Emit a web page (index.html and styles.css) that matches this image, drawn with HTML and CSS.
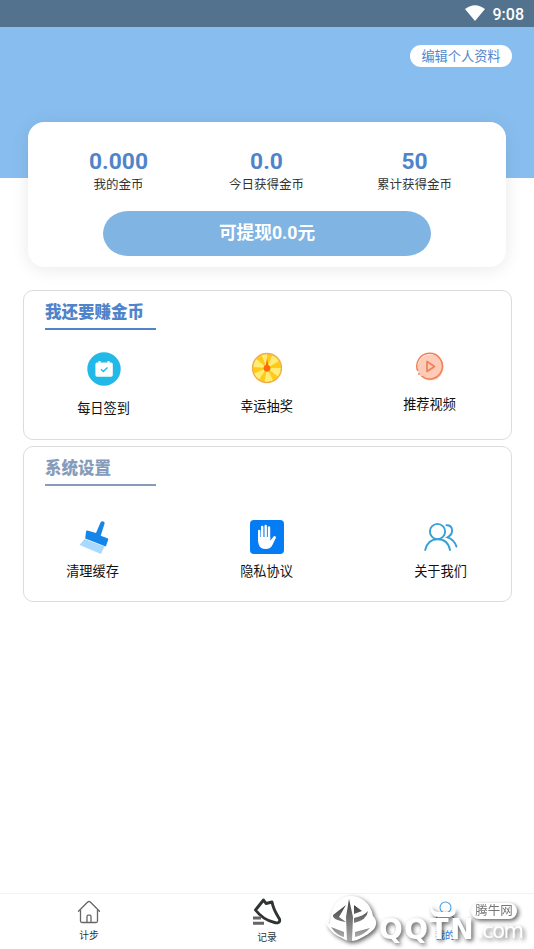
FILE: index.html
```html
<!DOCTYPE html>
<html lang="zh-CN">
<head>
<meta charset="utf-8">
<title>我的</title>
<link rel="stylesheet" href="styles.css">
</head>
<body>
<div class="screen">
  <header class="status">
    <svg class="wifi" width="20" height="16" viewBox="0 0 20 16"><path d="M0 4Q10-3.600 20 4L10 16Z" fill="#fff"/></svg>
    <span class="clock">9:08</span>
  </header>
  <section class="hero"><button class="edit">编辑个人资料</button></section>

  <section class="wallet">
    <div class="stats">
      <div class="stat"><b>0.000</b><span>我的金币</span></div>
      <div class="stat"><b>0.0</b><span>今日获得金币</span></div>
      <div class="stat"><b>50</b><span>累计获得金币</span></div>
    </div>
    <button class="withdraw">可提现0.0元</button>
  </section>

  <section class="panel earn">
    <h2>我还要赚金币</h2>
    <div class="items">
      <div class="item">
        <svg width="34" height="34" viewBox="0 0 34 34"><circle cx="17" cy="17" r="16.700" fill="#20b9e8"/><path d="M10 10.500h1.500V9h2v1.500h7V9h2v1.500H24q1.800 0 1.800 1.800V23q0 1.800-1.800 1.800H10.200Q8.400 24.800 8.400 23V12.300q0-1.800 1.600-1.800Z" fill="#fff"/><path d="m14 17.300 2.300 2.200 4.200-4" fill="none" stroke="#20b9e8" stroke-width="1.400"/></svg>
        <span>每日签到</span>
      </div>
      <div class="item">
        <svg width="32" height="32" viewBox="0 0 32 32"><circle cx="16" cy="16" r="14.500" fill="#ffca18"/><g fill="#ffed78"><path d="M16 16 10.500 3A14 14 0 0 1 16 2Z"/><path d="M16 16 21.400 3A14 14 0 0 1 28 9Z"/><path d="M16 16 30 16A14 14 0 0 1 27 24.500Z"/><path d="M16 16 22 28.600A14 14 0 0 1 13.500 29.800Z"/><path d="M16 16 8 27.500A14 14 0 0 1 3 21.500Z"/><path d="M16 16 2 15A14 14 0 0 1 5.300 7Z"/></g><circle cx="16" cy="16" r="14.500" fill="none" stroke="#f0ad4a" stroke-width="1.300"/><path d="M16 6l1.200 7a3.500 3.500 0 1 1-2.400 0Z" fill="#ff6b0b"/></svg>
        <span>幸运抽奖</span>
      </div>
      <div class="item">
        <svg width="30" height="30" viewBox="0 0 30 30"><circle cx="15.500" cy="15.500" r="13" fill="#ffcbb9"/><path d="M2.800 19A12.800 12.800 0 1 1 6.500 24" fill="none" stroke="#ee8158" stroke-width="1.500"/><path d="m3.500 21.200 1 1.500" stroke="#ee8158" stroke-width="1.600"/><path d="M12 9.500v10l7.500-5Z" fill="none" stroke="#ee8158" stroke-width="1.700" stroke-linejoin="round"/></svg>
        <span>推荐视频</span>
      </div>
    </div>
  </section>

  <section class="panel settings">
    <h2>系统设置</h2>
    <div class="items">
      <div class="item clean">
        <svg width="34" height="36" viewBox="0 0 34 36"><path d="m6.500 19 20 7.500-3.500 7.500L1.500 25Z" fill="#a9dafd"/><path d="m9.300 10.500 8.700 2.600 4.500-10.500q1.500-2.300 3.500-.8.900.7.500 2l-3.800 12 6.800 2.400q1 .5.700 1.600l-2.400 6.700L7.200 18.500l.9-7.200q.2-1 1.200-.8Z" fill="#1685e8"/></svg>
        <span>清理缓存</span>
      </div>
      <div class="item">
        <svg width="34" height="34" viewBox="0 0 34 34"><rect width="34" height="34" rx="4" fill="#047cf4"/><g fill="none" stroke="#fff" stroke-width="2.400" stroke-linecap="round"><path d="M9.200 11v9M12.200 7v12M15.700 6v13M19 7.500V19"/><path d="m24.500 17.500-3.500 5" stroke-width="2.800"/></g><path d="M8 17h12.200v3.500L23 18l2.700.1-3 6.300q-2 4.500-7 4.500-5.500 0-7-4.500Q7.800 22.300 8 17Z" fill="#fff"/></svg>
        <span>隐私协议</span>
      </div>
      <div class="item">
        <svg width="34" height="34" viewBox="0 0 34 34" fill="none" stroke="#36a0d6" stroke-width="1.900" stroke-linecap="round"><circle cx="13.500" cy="11.500" r="7.600"/><path d="M1.200 30C3 22.500 7.500 19.300 13.500 19.300S24.500 22.500 26 30M22.500 5.200C29 5 30.500 13.500 23.500 17.300c5 1.600 7.500 4.500 9 9.300"/></svg>
        <span>关于我们</span>
      </div>
    </div>
  </section>

  <nav class="tabs">
    <a class="tab"><svg width="24" height="24" viewBox="0 0 24 24" fill="none" stroke="#666" stroke-width="1.300" stroke-linejoin="round" stroke-linecap="round"><path d="M1.500 11.200 10.700 2q1.300-1 2.600 0l9.200 9.200M3.500 10v11q0 1.500 1.500 1.500h14q1.500 0 1.500-1.500V10M10 22v-5.500q0-1.300 1.300-1.300h1.400q1.300 0 1.300 1.300V22"/></svg><span>计步</span></a>
    <a class="tab record"><svg width="30" height="28" viewBox="0 0 30 28"><path d="M3.500 12 11.500 2l2.500 3.500L20 4C21.500 12 24.500 16 27.500 21c1 3.500-2 4.500-5 3.500C14 22.500 8 18 3.500 12Z" fill="none" stroke="#303333" stroke-width="2.900" stroke-linejoin="round"/><path d="M1 20h8M1 25.300h11" stroke="#666" stroke-width="3"/></svg><span>记录</span></a>
    <a class="tab mine"><svg width="24" height="24" viewBox="0 0 24 24" fill="none" stroke="#40a0e8" stroke-width="1.100"><circle cx="12.500" cy="7.500" r="5.500"/><path d="M2 22c1-6 4-9 10-9s9 3 10 9"/></svg><span>我的</span></a>
  </nav>

  <div class="mark">
    <svg class="mark-logo" width="56" height="56" viewBox="0 0 56 56">
      <defs><linearGradient id="shade" x1="0" y1="0" x2="0" y2="1"><stop offset="0" stop-color="#444"/><stop offset="1" stop-color="#aaa"/></linearGradient></defs>
      <path d="M7 23C9 10 17 3 27 3s20 7 22 20c4 4 4 9 1 13-5 5-9 7-13 9-6 4-14 4-19 0C12 43 4 37 2 29l4 2Z" fill="#fff"/>
      <path d="m25 6-3 18 1 24h5l1-24Z" fill="url(#shade)"/>
      <path d="m22 12-13 10q-1 5 13 7l-7-5ZM30 12l8 6-8 3v4q10-2 14-7-1 9-14 12ZM7 34q5 8 13 10v-5ZM31 39v5q9-2 15-9Z" fill="url(#shade)"/>
    </svg>
    <svg class="mark-horns" width="30" height="18" viewBox="0 0 30 18"><path d="M1 3c-2 7 2 12 8 12h9c6 0 9-4 7-9-1 3-3 4-7 4H9C5 10 2 8 1 3Z" fill="#fff"/></svg>
    <span class="mark-name">QQTN</span>
    <span class="mark-domain">.com</span>
    <span class="mark-tag">腾牛网</span>
  </div>
</div>
</body>
</html>
```
FILE: styles.css
```css
* { box-sizing: border-box; }
body {
  margin: 0;
  background: #fff;
  font-family: Roboto, "Noto Sans CJK SC", sans-serif;
}
button { border: 0; padding: 0; font-family: inherit; }
svg { display: block; flex: none; }

.screen {
  position: relative;
  display: flex;
  flex-direction: column;
  height: 949px;
  overflow: hidden;
}
.status {
  display: flex;
  align-items: center;
  justify-content: flex-end;
  gap: 8px;
  height: 27px;
  padding-right: 10px;
  background: #52728e;
}
.wifi { margin-bottom: 1px; }
.clock { color: #fff; font-size: 16px; font-weight: 500; line-height: 27px; padding-top: 2px; }

.hero {
  display: flex;
  justify-content: flex-end;
  align-items: flex-start;
  height: 151px;
  padding: 18px 22px 0 0;
  background: #88beef;
}
.edit {
  width: 102px;
  height: 22px;
  padding-top: 1px;
  border-radius: 11px;
  background: #fff;
  color: #5586ca;
  font-size: 13.200px;
  line-height: 21px;
}

.wallet {
  width: 478px;
  height: 145px;
  margin: -56px 0 0 28px;
  padding: 27px 18px 0 16px;
  border-radius: 16px;
  background: #fff;
  box-shadow: 0 2px 18px rgba(0, 0, 0, .09);
}
.stats { display: grid; grid-template-columns: repeat(3, 148px); }
.stat { display: flex; flex-direction: column; align-items: center; padding-left: 1px; }
.stat b { color: #5084ca; font-size: 22.800px; line-height: 26px; font-weight: 700; }
.stat span { color: #333; font-size: 12.500px; line-height: 20px; }
.withdraw {
  display: block;
  width: 328px;
  height: 45px;
  margin: 16px 0 0 59px;
  border-radius: 25px / 22.500px;
  background: #80b4e2;
  color: #fff;
  font-size: 17.700px;
  font-weight: 700;
  line-height: 45px;
}

.panel {
  width: 489px;
  margin-left: 22.500px;
  border: 1.500px solid #dcdcde;
  border-radius: 10px;
  background: #fff;
}
.panel h2 {
  width: 111px;
  height: 30px;
  margin: 0 0 0 21.500px;
  padding-top: 1px;
  font-size: 16.500px;
  line-height: 24px;
  font-weight: 900;
  border-bottom: 2px solid;
}
.earn { height: 150px; margin-top: 23px; padding-top: 9px; }
.settings { height: 156px; margin-top: 6px; padding-top: 9px; }
.earn h2 { color: #5084ca; }
.settings h2 { color: #869cba; }
.items { display: flex; justify-content: space-between; }
.earn .items { padding: 22px 54px 0 53px; }
.settings .items { padding: 34px 43px 0 42px; }
.item { display: flex; flex-direction: column; align-items: center; width: 54px; }
.item span { margin-top: 13px; color: #111; font-size: 13.200px; line-height: 20px; white-space: nowrap; }
.settings .item span { margin-top: 8px; }
.settings .clean span { margin-top: 6px; }
.clean svg { margin-left: 4px; }

.tabs {
  display: grid;
  grid-template-columns: repeat(3, 178px);
  height: 56px;
  margin-top: auto;
  border-top: 1px solid #f3f3f3;
}
.tab { display: flex; flex-direction: column; align-items: center; padding-top: 6px; }
.tab span { margin-top: 4px; color: #333; font-size: 9.800px; line-height: 16px; }
.record { padding-top: 4px; }
.record span { margin-top: 4px; }
.mine span { color: #1684e8; }

.mark {
  position: absolute;
  left: 324px;
  top: 891px;
  width: 210px;
  height: 58px;
  color: #fff;
  filter: drop-shadow(2px 2px 2px rgba(0, 0, 0, .6));
}
.mark-logo { position: absolute; left: 0; top: 2px; }
.mark-horns { position: absolute; left: 106px; top: 11px; }
.mark-name {
  position: absolute;
  left: 55px;
  top: 22px;
  font: 700 28px/34px "DejaVu Sans", sans-serif;
  letter-spacing: 1.500px;
  white-space: nowrap;
}
.mark-domain {
  position: absolute;
  left: 153px;
  top: 23px;
  font: 400 21px/34px "DejaVu Sans", sans-serif;
  letter-spacing: -1.500px;
}
.mark-tag {
  position: absolute;
  left: 147px;
  top: 12px;
  width: 46px;
  height: 16px;
  border-radius: 8px;
  background: #fff;
  color: #777;
  font-size: 12.500px;
  line-height: 16px;
  text-align: center;
}
```
